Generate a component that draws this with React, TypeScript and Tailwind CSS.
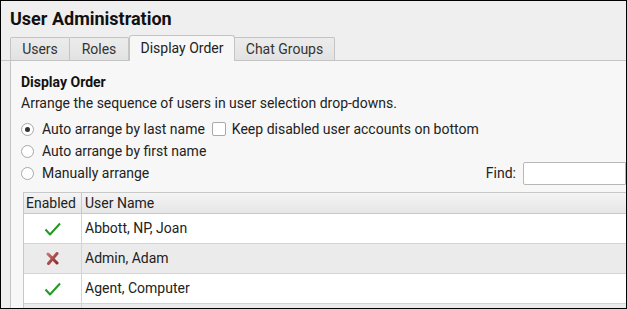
import React from 'react';

const tabs = [
    { label: 'Users', w: 'w-[60px]' },
    { label: 'Roles', w: 'w-[60px]' },
    { label: 'Display Order', w: 'w-[106px]', active: true },
    { label: 'Chat Groups', w: 'w-[101px]' },
];

const users = [
    { name: 'Abbott, NP, Joan', enabled: true },
    { name: 'Admin, Adam', enabled: false },
    { name: 'Agent, Computer', enabled: true },
    { name: '', enabled: true, hidden: true },
];

const Check = () => (
    <svg width="17" height="14" viewBox="0 0 17 14">
        <path d="M1.5 7.5 L6 12.5 L16 1.5" fill="none" stroke="#229a22" strokeWidth="2" strokeLinejoin="round" />
    </svg>
);

const Cross = () => (
    <svg width="13" height="13" viewBox="0 0 13 13">
        <defs>
            <linearGradient id="xg" x1="0" y1="0" x2="1" y2="1">
                <stop offset="0" stopColor="#c97070" />
                <stop offset="1" stopColor="#8a2c2c" />
            </linearGradient>
        </defs>
        <path d="M2 2 L11 11 M11 1.5 L2.5 11.5" stroke="url(#xg)" strokeWidth="3" strokeLinecap="round" />
    </svg>
);

const Radio = ({ on }: { on?: boolean }) => (
    <span className="w-[13px] h-[13px] rounded-full border border-[#a8a8a8] bg-white flex items-center justify-center shrink-0">
        {on && <span className="w-[5px] h-[5px] rounded-full bg-[#333]" />}
    </span>
);

const App = () => {
    return (
        <div className="w-[627px] h-[309px] overflow-hidden bg-white">
            <div className="w-[627px] h-[309px] overflow-hidden border border-black bg-[#efefef] flex flex-col text-[#222] font-['Roboto',sans-serif]">
                {/* Title */}
                <div className="shrink-0 h-[35px] pl-[9px] flex items-center text-[18px] font-bold text-[#111]">User Administration</div>

                {/* Tabs */}
                <div className="shrink-0 flex items-end h-[25px] pl-[9px] border-b border-[#c4c4c4]">
                    {tabs.map((t) =>
                        t.active ? (
                            <div key={t.label} className={`${t.w} h-[26px] -mb-px bg-[#f7f7f7] border border-b-0 border-[#c4c4c4] rounded-t-[3px] flex items-center justify-center text-[14px] relative z-10`}>
                                {t.label}
                            </div>
                        ) : (
                            <div key={t.label} className={`${t.w} h-[23px] bg-gradient-to-b from-[#ececec] to-[#e2e2e2] border border-b-0 border-[#c4c4c4] -ml-px first:ml-0 rounded-t-[2px] flex items-center justify-center text-[14px] text-[#333]`}>
                                {t.label}
                            </div>
                        )
                    )}
                </div>

                {/* Panel */}
                <div className="shrink-0 ml-[9px] bg-[#f7f7f7] border-l border-[#c4c4c4] pl-[10px] pt-[11px] flex flex-col">
                    <div className="text-[14px] font-bold text-[#111] leading-[20px]">Display Order</div>
                    <div className="text-[14px] leading-[20px] mt-[1px]">Arrange the sequence of users in user selection drop-downs.</div>

                    <div className="mt-[5px] flex flex-col">
                        <div className="h-[22px] flex items-center gap-[8px] text-[14px]">
                            <Radio on />
                            <span>Auto arrange by last name</span>
                            <span className="-ml-[1px] w-[14px] h-[14px] border border-[#a8a8a8] bg-white rounded-[2px]" />
                            <span className="-ml-[2px]">Keep disabled user accounts on bottom</span>
                        </div>
                        <div className="h-[22px] flex items-center gap-[8px] text-[14px]">
                            <Radio />
                            <span>Auto arrange by first name</span>
                        </div>
                        <div className="h-[23px] flex items-center gap-[8px] text-[14px]">
                            <Radio />
                            <span className="flex-1">Manually arrange</span>
                            <span className="mr-[-1px]">Find:</span>
                            <span className="w-[103px] h-[23px] bg-white border border-[#b8b8b8] rounded-l-[2px]" />
                        </div>
                    </div>

                    {/* Table */}
                    <div className="mt-[7px] ml-[2px] border-l border-t border-[#c8c8c8] bg-white">
                        <div className="flex h-[21px] bg-gradient-to-b from-[#f4f4f4] to-[#e6e6e6] border-b border-[#c8c8c8] text-[14px]">
                            <div className="w-[58px] border-r border-[#c8c8c8] pl-[2px] flex items-center">Enabled</div>
                            <div className="flex-1 pl-[3px] flex items-center">User Name</div>
                        </div>
                        {users.map((u, i) => (
                            <div key={i} className={`flex h-[30px] border-b border-[#d4d4d4] text-[14px] ${i % 2 === 1 ? 'bg-[#ebebeb]' : 'bg-white'}`}>
                                <div className="w-[58px] border-r border-[#d4d4d4] flex items-center justify-center">
                                    {!u.hidden && (u.enabled ? <Check /> : <Cross />)}
                                </div>
                                <div className="flex-1 pl-[3px] flex items-center">{u.name}</div>
                            </div>
                        ))}
                    </div>
                </div>
            </div>
        </div>
    );
};

export default App;
